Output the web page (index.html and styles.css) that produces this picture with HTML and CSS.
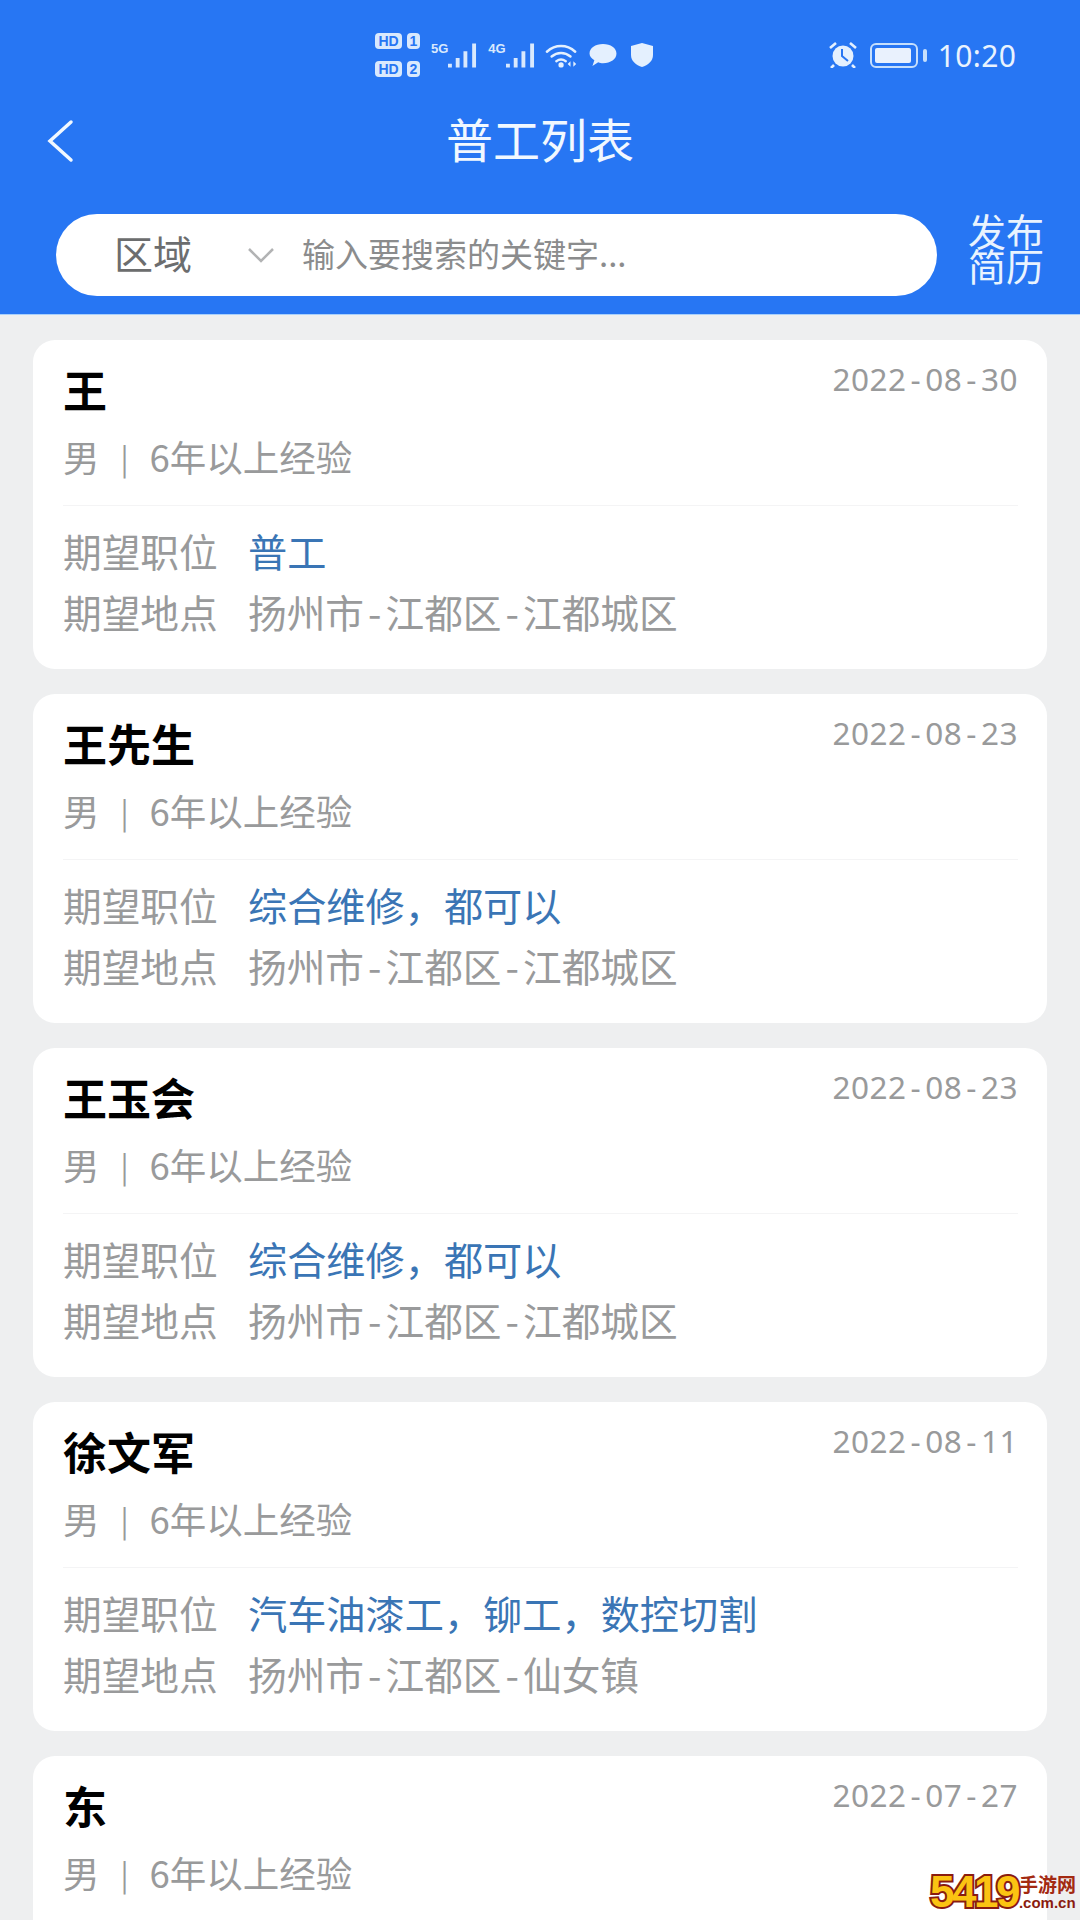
FILE: index.html
```html
<!DOCTYPE html>
<html lang="zh-CN">
<head>
    <meta charset="UTF-8">
    <meta name="viewport" content="width=device-width, initial-scale=1.0">
    <title>普工列表</title>
    <link rel="stylesheet" href="styles.css">
</head>
<body>

    <header class="cabecera">
        <div class="estado">
            <div class="sims">
                <div class="sim"><span class="sim-hd">HD</span><span class="sim-num">1</span></div>
                <div class="sim"><span class="sim-hd">HD</span><span class="sim-num">2</span></div>
            </div>
            <div class="red"><span class="red-tipo">5G</span>
                <svg class="barras" viewBox="0 0 30 25"><path d="M2 21v4M10 15v10M18 8v17M27 0v25" /></svg>
            </div>
            <div class="red"><span class="red-tipo">4G</span>
                <svg class="barras" viewBox="0 0 30 25"><path d="M2 21v4M10 15v10M18 8v17M27 0v25" /></svg>
            </div>
            <svg class="ico-wifi" viewBox="0 0 36 26">
                <path d="M2 9C11 1 23 1 32 9M7 14c6-5 14-5 20 0M12 19c3-2 7-2 10 0" fill="none" stroke="#e4f0fe" stroke-width="2.6" stroke-linecap="round"/>
                <circle cx="17" cy="23" r="2.8" fill="#e4f0fe"/>
                <path d="M27 19v6l-3-3zM30 19v6l3-3z" fill="#e4f0fe"/>
            </svg>
            <svg class="ico-chat" viewBox="0 0 30 26"><path d="M15 1c8 0 14 4 14 10s-6 10-14 10c-2 0-3 0-5-1l-6 4 2-6C3 16 1 14 1 11 1 5 7 1 15 1z" fill="#e4f0fe"/></svg>
            <svg class="ico-escudo" viewBox="0 0 26 26"><path d="M13 1l11 3v9c0 6-5 10-11 12C7 23 2 19 2 13V4z" fill="#e4f0fe"/></svg>
            <svg class="ico-alarma" viewBox="0 0 30 26">
                <circle cx="15" cy="14" r="10.5" fill="#e4f0fe"/>
                <path d="M14 7v7l6 5" fill="none" stroke="#2776f3" stroke-width="2"/>
                <path d="M2 6l6-5M28 6l-6-5M6 23l-3 3M24 23l3 3" fill="none" stroke="#e4f0fe" stroke-width="2.6"/>
            </svg>
            <div class="bateria"><div class="bateria-nivel"></div></div>
            <span class="hora">10:20</span>
        </div>

        <div class="titulo">
            <svg class="volver" viewBox="0 0 32 44"><path d="M27 3L6 22l21 19" /></svg>
            <h1>普工列表</h1>
        </div>

        <div class="busqueda">
            <div class="caja">
                <span class="area">区域</span>
                <svg class="flecha" viewBox="0 0 28 16"><path d="M2 2l12 12L26 2" /></svg>
                <span class="placeholder">输入要搜索的关键字...</span>
            </div>
            <div class="publicar">发布<br>简历</div>
        </div>
    </header>

    <main class="lista">

        <article class="tarjeta">
            <div class="fila-nombre"><span class="nombre">王</span><span class="fecha">2022<i class="guion">-</i>08<i class="guion">-</i>30</span></div>
            <div class="meta"><span>男</span><span class="sep">|</span><span>6年以上经验</span></div>
            <div class="detalle">
                <div class="fila"><span class="etiqueta">期望职位</span><span class="puesto">普工</span></div>
                <div class="fila"><span class="etiqueta">期望地点</span><span>扬州市<i class="guion">-</i>江都区<i class="guion">-</i>江都城区</span></div>
            </div>
        </article>

        <article class="tarjeta">
            <div class="fila-nombre"><span class="nombre">王先生</span><span class="fecha">2022<i class="guion">-</i>08<i class="guion">-</i>23</span></div>
            <div class="meta"><span>男</span><span class="sep">|</span><span>6年以上经验</span></div>
            <div class="detalle">
                <div class="fila"><span class="etiqueta">期望职位</span><span class="puesto">综合维修，都可以</span></div>
                <div class="fila"><span class="etiqueta">期望地点</span><span>扬州市<i class="guion">-</i>江都区<i class="guion">-</i>江都城区</span></div>
            </div>
        </article>

        <article class="tarjeta">
            <div class="fila-nombre"><span class="nombre">王玉会</span><span class="fecha">2022<i class="guion">-</i>08<i class="guion">-</i>23</span></div>
            <div class="meta"><span>男</span><span class="sep">|</span><span>6年以上经验</span></div>
            <div class="detalle">
                <div class="fila"><span class="etiqueta">期望职位</span><span class="puesto">综合维修，都可以</span></div>
                <div class="fila"><span class="etiqueta">期望地点</span><span>扬州市<i class="guion">-</i>江都区<i class="guion">-</i>江都城区</span></div>
            </div>
        </article>

        <article class="tarjeta">
            <div class="fila-nombre"><span class="nombre">徐文军</span><span class="fecha">2022<i class="guion">-</i>08<i class="guion">-</i>11</span></div>
            <div class="meta"><span>男</span><span class="sep">|</span><span>6年以上经验</span></div>
            <div class="detalle">
                <div class="fila"><span class="etiqueta">期望职位</span><span class="puesto">汽车油漆工，铆工，数控切割</span></div>
                <div class="fila"><span class="etiqueta">期望地点</span><span>扬州市<i class="guion">-</i>江都区<i class="guion">-</i>仙女镇</span></div>
            </div>
        </article>

        <article class="tarjeta">
            <div class="fila-nombre"><span class="nombre">东</span><span class="fecha">2022<i class="guion">-</i>07<i class="guion">-</i>27</span></div>
            <div class="meta"><span>男</span><span class="sep">|</span><span>6年以上经验</span></div>
        </article>

    </main>

    <div class="marca">
        <span class="marca-num">5419</span>
        <div class="marca-texto">
            <span class="marca-cn">手游网</span>
            <span class="marca-com">.com.cn</span>
        </div>
    </div>

</body>
</html>
```

FILE: styles.css
```css
html, body {
    margin: 0;
    padding: 0;
    height: 1920px;
    overflow: hidden;
}
body {
    position: relative;
    background-color: #eeeff0;
    font-family: "Noto Sans CJK SC", "Noto Sans", sans-serif;
    color: #999a9b;
}

/* Cabecera azul */
.cabecera {
    height: 315px;
    box-sizing: border-box;
    background-color: #2776f3;
    border-bottom: 1px solid #a9d0fb;
    color: #e9f3fe;
}
.estado {
    height: 110px;
    box-sizing: border-box;
    padding-left: 375px;
    display: flex;
    align-items: center;
}
.sims {
    display: flex;
    flex-direction: column;
    gap: 12px;
}
.sim {
    display: flex;
    gap: 5px;
}
.sim-hd, .sim-num {
    height: 16px;
    border-radius: 4px;
    background-color: #d9e9fd;
    color: #2776f3;
    text-align: center;
    font: bold 14px/16px "Liberation Sans", sans-serif;
}
.sim-hd { width: 27px; }
.sim-num { width: 13px; }
.red {
    display: flex;
    align-items: flex-end;
    height: 25px;
    margin-left: 11px;
}
.red + .red { margin-left: 11px; }
.red-tipo {
    align-self: flex-start;
    font: bold 13px/12px "Liberation Sans", sans-serif;
    color: #d9e9fd;
}
.barras {
    width: 29px;
    height: 25px;
}
.barras path {
    fill: none;
    stroke: #d9e9fd;
    stroke-width: 4;
}
.ico-wifi { width: 34px; height: 25px; margin-left: 10px; }
.ico-chat { width: 30px; height: 25px; margin-left: 9px; }
.ico-escudo { width: 26px; height: 26px; margin-left: 11px; }
.ico-alarma { width: 32px; height: 26px; margin-left: 172px; }
.bateria {
    width: 48px;
    height: 25px;
    box-sizing: border-box;
    margin-left: 11px;
    padding: 3px;
    border: 2px solid #c6dffc;
    border-radius: 6px;
    position: relative;
}
.bateria::after {
    content: "";
    position: absolute;
    right: -11px;
    top: 4px;
    width: 4px;
    height: 13px;
    border-radius: 2px;
    background-color: #c6dffc;
}
.bateria-nivel {
    width: 36px;
    height: 100%;
    border-radius: 2px;
    background-color: #e9f1fd;
}
.hora {
    margin-left: 20px;
    font-family: "Noto Sans", sans-serif;
    font-size: 30px;
    letter-spacing: 0.4px;
}

.titulo {
    position: relative;
    height: 54px;
    display: flex;
    justify-content: center;
    align-items: center;
}
.titulo h1 {
    margin: 0;
    font-size: 47px;
    font-weight: 400;
    color: #f1f8ff;
}
.volver {
    position: absolute;
    left: 44px;
    top: 9px;
    width: 32px;
    height: 44px;
}
.volver path {
    fill: none;
    stroke: #f1f8ff;
    stroke-width: 3.5;
    stroke-linecap: round;
}

.busqueda {
    margin-top: 50px;
    padding-left: 56px;
    display: flex;
    align-items: flex-start;
}
.caja {
    width: 881px;
    height: 82px;
    flex-shrink: 0;
    border-radius: 41px;
    background-color: #fff;
    display: flex;
    align-items: center;
}
.area {
    margin: 0 0 6px 58px;
    font-size: 39px;
    color: #6c6d6e;
}
.flecha {
    width: 28px;
    height: 16px;
    margin-left: 55px;
}
.flecha path {
    fill: none;
    stroke: #b2b3b4;
    stroke-width: 2.5;
}
.placeholder {
    margin: 0 0 4px 27px;
    font-size: 33px;
    color: #8b8c8d;
}
.publicar {
    margin: -2px 0 0 31px;
    font-size: 38px;
    line-height: 35px;
    color: #e9f3fe;
}

/* Lista de tarjetas */
.lista {
    padding: 25px 33px 0;
    display: flex;
    flex-direction: column;
    gap: 25px;
}
.tarjeta {
    height: 329px;
    flex-shrink: 0;
    box-sizing: border-box;
    padding: 19px 29px 0 30px;
    background-color: #fff;
    border-radius: 22px;
}
.guion {
    font-style: normal;
    margin: 0 4px;
}
.fila-nombre {
    display: flex;
    justify-content: space-between;
    align-items: flex-start;
    height: 60px;
}
.nombre {
    font-size: 44px;
    line-height: 60px;
    font-weight: 700;
    color: #000;
}
.fecha {
    margin-top: 2px;
    font-family: "Noto Sans", sans-serif;
    font-size: 31.5px;
    line-height: 36px;
    letter-spacing: 0.5px;
}
.fecha .guion { margin: 0 4px; }
.meta {
    margin-top: 13px;
    height: 74px;
    box-sizing: border-box;
    line-height: 50px;
    font-size: 36.5px;
    border-bottom: 1px solid #f4f4f5;
    display: flex;
    gap: 21px;
}
.sep { font-size: 30px; }
.detalle {
    padding-top: 19px;
}
.fila {
    display: flex;
    height: 61px;
    line-height: 50px;
    font-size: 38.7px;
    white-space: nowrap;
}
.etiqueta {
    width: 185px;
    flex-shrink: 0;
}
.puesto { font-size: 39.2px; color: #3a75b5; }

/* Marca de agua de la esquina */
.marca {
    position: absolute;
    right: 0;
    bottom: 5px;
    width: 150px;
    height: 47px;
    display: flex;
    align-items: center;
    white-space: nowrap;
}
.marca-num {
    font: bold 44px/47px "Liberation Sans", sans-serif;
    color: #fbc312;
    -webkit-text-stroke: 4px #8a1c10;
    paint-order: stroke fill;
    letter-spacing: -2.5px;
}
.marca-texto {
    display: flex;
    flex-direction: column;
    margin-left: 1px;
}
.marca-cn {
    font-size: 19px;
    line-height: 22px;
    font-weight: 700;
    color: #a32a12;
}
.marca-com {
    font: bold 15px/16px "Liberation Sans", sans-serif;
    color: #8a1c10;
}
```
